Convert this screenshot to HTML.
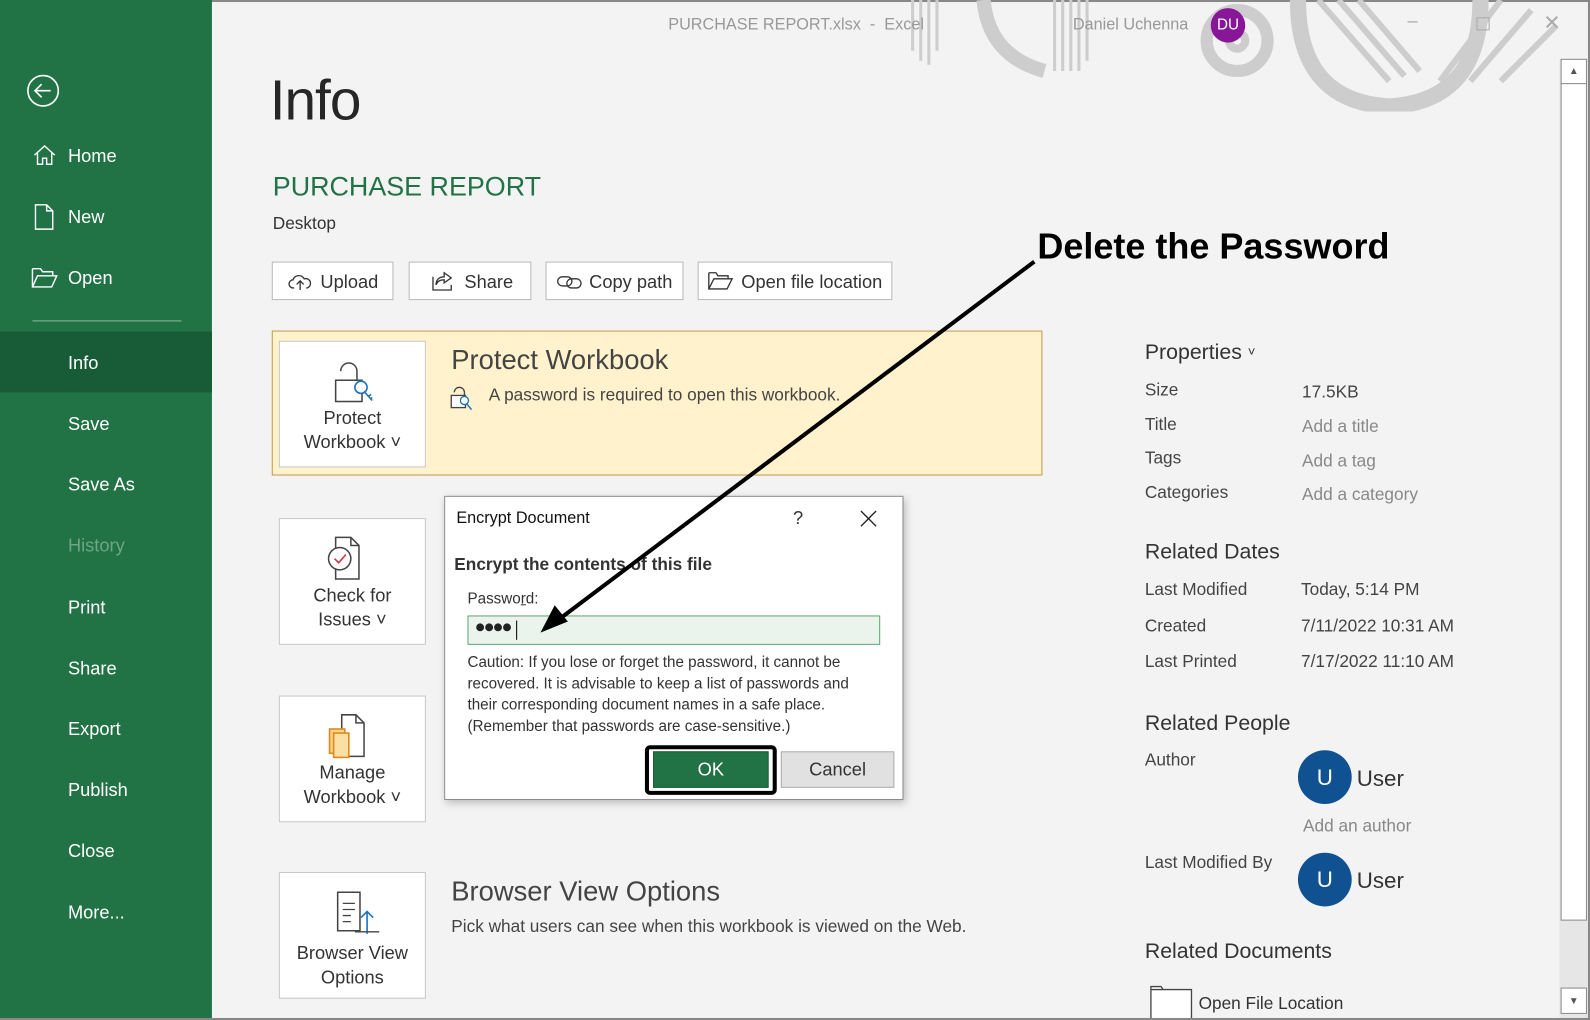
<!DOCTYPE html>
<html><head><meta charset="utf-8"><style>
*{margin:0;padding:0;box-sizing:border-box}
html,body{width:1590px;height:1020px;overflow:hidden;background:#f3f3f3;font-family:"Liberation Sans",sans-serif}
#w{position:absolute;left:0;top:0;width:1568px;height:1006px;transform:scale(1.01403,1.01392);transform-origin:0 0;background:#f3f3f3;overflow:hidden}
.a{position:absolute;white-space:nowrap}
.side{position:absolute;left:0;top:0;width:209px;height:1006px;background:#217346}
.mi{position:absolute;left:67px;color:#fff;font-size:18px}
.btn{position:absolute;top:258px;height:38px;background:#fff;border:1px solid #b9b9b9;font-size:18px;color:#333;padding:9px 0 0 0}
.card{position:absolute;left:275px;width:145px;height:125px;background:#fff;border:1px solid #c6c6c6;text-align:center;font-size:18px;color:#333;line-height:24px}
.pl{position:absolute;left:1129px;font-size:17px;color:#444}
.pv{position:absolute;left:1284px;font-size:17px;color:#444}
.g{color:#888}
.h{position:absolute;left:1129px;font-size:21px;color:#333}
.av{position:absolute;left:1280px;width:53px;height:53px;border-radius:50%;background:#0f5191;color:#fff;font-size:22px;text-align:center;line-height:53px}
</style></head><body><div id="w">
<div style="position:absolute;left:0;top:0;width:1568px;height:2px;background:#888"></div>
<svg class="a" style="left:880px;top:0" width="660" height="110" viewBox="0 0 660 110">
<g stroke="#cdcdcd" fill="none">
<g stroke-width="3"><line x1="20" y1="0" x2="20" y2="50"/><line x1="28" y1="0" x2="28" y2="60"/><line x1="36" y1="0" x2="36" y2="64"/><line x1="44" y1="0" x2="44" y2="50"/></g>
<path d="M90 0 Q95 55 150 70" stroke-width="14"/>
<g stroke-width="3"><line x1="160" y1="0" x2="160" y2="70"/><line x1="168" y1="0" x2="168" y2="70"/><line x1="176" y1="0" x2="176" y2="70"/><line x1="184" y1="0" x2="184" y2="70"/><line x1="192" y1="0" x2="192" y2="60"/></g>
<circle cx="340" cy="40" r="30" stroke-width="12"/><circle cx="340" cy="40" r="8" stroke-width="8"/>
<path d="M400 0 Q400 100 490 105 Q580 100 580 0" stroke-width="16"/>
<g stroke-width="6"><line x1="420" y1="0" x2="490" y2="80"/><line x1="440" y1="0" x2="505" y2="75"/><line x1="460" y1="0" x2="520" y2="70"/><line x1="600" y1="0" x2="540" y2="80"/><line x1="630" y1="10" x2="570" y2="80"/><line x1="655" y1="25" x2="600" y2="80"/></g>
</g></svg>
<div class="a" style="left:659px;top:16px;font-size:16px;color:#999">PURCHASE REPORT.xlsx&nbsp; - &nbsp;Excel</div>
<div class="a" style="left:1058px;top:16px;font-size:16px;color:#999">Daniel Uchenna</div>
<div class="a" style="left:1194px;top:8px;width:34px;height:34px;border-radius:50%;background:#881798;color:#fff;font-size:15px;text-align:center;line-height:34px">DU</div>
<div class="a" style="left:1388px;top:10px;font-size:18px;color:#aaa">–</div>
<div class="a" style="left:1456px;top:17px;width:13px;height:13px;border:1px solid #aaa"></div>
<div class="a" style="left:1522px;top:10px;font-size:20px;color:#aaa">✕</div>
<div class="side">
<svg class="a" style="left:26px;top:73px" width="33" height="33"><circle cx="16.5" cy="16.5" r="15" fill="none" stroke="#fff" stroke-width="1.6"/><path d="M24 16.5H9M15 10l-6.5 6.5L15 23" fill="none" stroke="#fff" stroke-width="1.6"/></svg>
<svg class="a" style="left:32px;top:141px" width="24" height="24"><path d="M2 12L12 3l10 9M5 10v11h5v-6h4v6h5V10" fill="none" stroke="#fff" stroke-width="1.4"/></svg>
<div class="mi" style="top:144px">Home</div>
<svg class="a" style="left:33px;top:201px" width="22" height="26"><path d="M2 1h11l6 6v18H2zM13 1v6h6" fill="none" stroke="#fff" stroke-width="1.4"/></svg>
<div class="mi" style="top:204px">New</div>
<svg class="a" style="left:31px;top:263px" width="26" height="22"><path d="M1 2h8l2 3h10v4M1 2v18h19l5-11H6L1 20" fill="none" stroke="#fff" stroke-width="1.4"/></svg>
<div class="mi" style="top:264px">Open</div>
<div class="a" style="left:32px;top:316px;width:147px;height:1px;background:#8fb9a0"></div>
<div class="a" style="left:0;top:327px;width:209px;height:60px;background:#185c37"></div>
<div class="mi" style="top:348px">Info</div>
<div class="mi" style="top:408px">Save</div>
<div class="mi" style="top:468px">Save As</div>
<div class="mi" style="top:528px;color:#6da585">History</div>
<div class="mi" style="top:589px">Print</div>
<div class="mi" style="top:649px">Share</div>
<div class="mi" style="top:709px">Export</div>
<div class="mi" style="top:769px">Publish</div>
<div class="mi" style="top:829px">Close</div>
<div class="mi" style="top:890px">More...</div>
</div>
<div class="a" style="left:266px;top:66px;font-size:56px;color:#262626;letter-spacing:-1px">Info</div>
<div class="a" style="left:269px;top:169px;font-size:26.5px;color:#217346">PURCHASE REPORT</div>
<div class="a" style="left:269px;top:211px;font-size:17px;color:#333">Desktop</div>
<div class="btn" style="left:268px;width:120px"><span style="padding-left:47px">Upload</span></div>
<svg class="a" style="left:284px;top:268px" width="26" height="20"><path d="M6 16H5a4 4 0 010-8 6 6 0 0111-1 4.5 4.5 0 013 9h-1M12 18V9M8.5 12.5L12 9l3.5 3.5" fill="none" stroke="#333" stroke-width="1.3"/></svg>
<div class="btn" style="left:403px;width:121px"><span style="padding-left:54px">Share</span></div>
<svg class="a" style="left:424px;top:266px" width="26" height="22"><path d="M3 7v13h18v-5M14 3l7 5-7 5V10c-5 0-7 2-8 5 0-5 3-8 8-8z" fill="none" stroke="#333" stroke-width="1.3"/></svg>
<div class="btn" style="left:538px;width:136px"><span style="padding-left:42px">Copy path</span></div>
<svg class="a" style="left:549px;top:268px" width="26" height="20"><rect x="1" y="5" width="14" height="9" rx="4.5" fill="none" stroke="#333" stroke-width="1.3"/><rect x="10" y="7" width="14" height="9" rx="4.5" fill="none" stroke="#333" stroke-width="1.3"/></svg>
<div class="btn" style="left:688px;width:192px"><span style="padding-left:42px">Open file location</span></div>
<svg class="a" style="left:698px;top:267px" width="26" height="20"><path d="M1 2h7l2 3h10v3M1 2v16h18l5-10H6L1 18" fill="none" stroke="#333" stroke-width="1.3"/></svg>
<div class="a" style="left:268px;top:326px;width:760px;height:143px;background:#fff2cc;border:1px solid #c49a48"></div>
<div class="card" style="top:336px;padding-top:63px">Protect<br>Workbook ˅</div>
<svg class="a" style="left:328px;top:354px" width="46" height="46"><path d="M8 12a8 8 0 0116 0v9" fill="none" stroke="#444" stroke-width="1.5"/><rect x="3" y="21" width="26" height="21" fill="#fff" stroke="#444" stroke-width="1.5"/><circle cx="28" cy="28" r="6" fill="#fff" stroke="#1e73be" stroke-width="1.6"/><path d="M31 32l8 9M35 37l3-2M37 40l2-2" stroke="#1e73be" stroke-width="1.6" fill="none"/></svg>
<div class="a" style="left:445px;top:340px;font-size:27px;color:#444">Protect Workbook</div>
<svg class="a" style="left:443px;top:377px" width="28" height="28"><path d="M5 10a5 5 0 0110 0v4" fill="none" stroke="#444" stroke-width="1.3"/><rect x="2" y="13" width="14" height="12" fill="#fff" stroke="#444" stroke-width="1.3"/><circle cx="15" cy="18" r="4" fill="#fff" stroke="#1e73be" stroke-width="1.3"/><path d="M17 21l5 6" stroke="#1e73be" stroke-width="1.4"/></svg>
<div class="a" style="left:482px;top:380px;font-size:17px;color:#444">A password is required to open this workbook.</div>
<div class="card" style="top:511px;padding-top:63px">Check for<br>Issues ˅</div>
<svg class="a" style="left:320px;top:528px" width="46" height="46"><path d="M11 2h15l8 8v33H11z" fill="#fff" stroke="#444" stroke-width="1.5"/><path d="M26 2v8h8" fill="none" stroke="#444" stroke-width="1.5"/><circle cx="15" cy="23" r="11" fill="#fff" stroke="#444" stroke-width="1.5"/><path d="M10 23l4 4 7-8" fill="none" stroke="#d13438" stroke-width="1.6"/></svg>
<div class="a" style="left:445px;top:515px;font-size:27px;color:#444">Inspect Workbook</div>
<div class="a" style="left:445px;top:583px;font-size:17px;color:#444">Document properties, author's name and related dates and</div>
<div class="card" style="top:686px;padding-top:63px">Manage<br>Workbook ˅</div>
<svg class="a" style="left:320px;top:703px" width="46" height="46"><path d="M17 2h14l8 8v33H17z" fill="#fff" stroke="#444" stroke-width="1.5"/><path d="M31 2v8h8" fill="none" stroke="#444" stroke-width="1.5"/><rect x="5" y="16" width="15" height="24" fill="#f8d38a" stroke="#e08a1e" stroke-width="1.6"/><rect x="9" y="20" width="15" height="24" fill="#fbe0a5" stroke="#e08a1e" stroke-width="1.6"/></svg>
<div class="card" style="top:860px;padding-top:67px">Browser View<br>Options</div>
<svg class="a" style="left:330px;top:877px" width="46" height="46"><path d="M3 3h22v38H3z" fill="#fff" stroke="#444" stroke-width="1.5"/><path d="M8 14h12M8 20h12M8 26h8M8 32h8" stroke="#444" stroke-width="1.3"/><path d="M32 44V22M26 28l6-6 6 6" fill="none" stroke="#1e73be" stroke-width="1.6"/><path d="M20 42h24" stroke="#444" stroke-width="1.3"/></svg>
<div class="a" style="left:445px;top:864px;font-size:27px;color:#444">Browser View Options</div>
<div class="a" style="left:445px;top:904px;font-size:17px;color:#444">Pick what users can see when this workbook is viewed on the Web.</div>
<div class="h" style="top:336px">Properties <span style="font-size:13px;vertical-align:3px">˅</span></div>
<div class="pl" style="top:375px">Size</div><div class="pv" style="top:377px">17.5KB</div>
<div class="pl" style="top:409px">Title</div><div class="pv g" style="top:411px">Add a title</div>
<div class="pl" style="top:442px">Tags</div><div class="pv g" style="top:445px">Add a tag</div>
<div class="pl" style="top:476px">Categories</div><div class="pv g" style="top:478px">Add a category</div>
<div class="h" style="top:533px">Related Dates</div>
<div class="pl" style="top:572px">Last Modified</div><div class="pv" style="top:572px;left:1283px">Today, 5:14 PM</div>
<div class="pl" style="top:608px">Created</div><div class="pv" style="top:608px;left:1283px">7/11/2022 10:31 AM</div>
<div class="pl" style="top:643px">Last Printed</div><div class="pv" style="top:643px;left:1283px">7/17/2022 11:10 AM</div>
<div class="h" style="top:702px">Related People</div>
<div class="pl" style="top:740px">Author</div>
<div class="av" style="top:740px">U</div><div class="a" style="left:1338px;top:755px;font-size:22px;color:#333">User</div>
<div class="pv g" style="top:805px;left:1285px">Add an author</div>
<div class="pl" style="top:841px">Last Modified By</div>
<div class="av" style="top:841px">U</div><div class="a" style="left:1338px;top:856px;font-size:22px;color:#333">User</div>
<div class="h" style="top:927px">Related Documents</div>
<svg class="a" style="left:1134px;top:970px" width="44" height="36"><path d="M1 36V3h10l2 3h28v30" fill="#fff" stroke="#444" stroke-width="1.3"/><path d="M1 6h12" stroke="#444" stroke-width="1.3"/></svg>
<div class="a" style="left:1182px;top:980px;font-size:17px;color:#333">Open File Location</div>
<div class="a" style="left:1538px;top:58px;width:28px;height:948px;background:#e6e6e6"></div>
<div class="a" style="left:1539px;top:58px;width:26px;height:850px;background:#fff;border:1px solid #888"></div>
<div class="a" style="left:1539px;top:58px;width:26px;height:25px;border-bottom:1px solid #888;font-size:10px;color:#555;text-align:center;line-height:25px">▲</div>
<div class="a" style="left:1539px;top:974px;width:26px;height:26px;background:#fff;border:1px solid #888;font-size:10px;color:#555;text-align:center;line-height:26px">▼</div>
<div class="a" style="left:1566px;top:0;width:2px;height:1006px;background:#888"></div>
<div class="a" style="left:0;top:1004px;width:1568px;height:2px;background:#888"></div>
<div class="a" style="left:438px;top:489px;width:453px;height:300px;background:#fff;border:1px solid #8a8a8a;box-shadow:2px 3px 8px rgba(0,0,0,.25)"></div>
<div class="a" style="left:450px;top:503px;font-size:16px;color:#111">Encrypt Document</div>
<div class="a" style="left:782px;top:501px;font-size:18px;color:#333">?</div>
<svg class="a" style="left:848px;top:503px" width="17" height="17"><path d="M1 1l15 15M16 1L1 16" stroke="#222" stroke-width="1.3"/></svg>
<div class="a" style="left:448px;top:547px;font-size:17px;font-weight:bold;color:#333">Encrypt the contents of this file</div>
<div class="a" style="left:461px;top:582px;font-size:15px;color:#333">Passwo<u>r</u>d:</div>
<div class="a" style="left:461px;top:607px;width:407px;height:29px;background:#eaf4ec;border:1px solid #5fa66f"></div>
<div class="a" style="left:468px;top:608px;font-size:18px;color:#222;letter-spacing:-2px">●●●●</div>
<div class="a" style="left:509px;top:612px;width:1px;height:19px;background:#000"></div>
<div class="a" style="left:461px;top:643px;font-size:15px;color:#333;line-height:21px">Caution: If you lose or forget the password, it cannot be<br>recovered. It is advisable to keep a list of passwords and<br>their corresponding document names in a safe place.<br>(Remember that passwords are case-sensitive.)</div>
<div class="a" style="left:636px;top:735px;width:130px;height:49px;border:4px solid #000;border-radius:5px"></div>
<div class="a" style="left:644px;top:741px;width:114px;height:36px;background:#217346;border:1px solid #155f35;color:#fff;font-size:18px;text-align:center;line-height:34px">OK</div>
<div class="a" style="left:770px;top:741px;width:112px;height:36px;background:#e1e1e1;border:1px solid #adadad;color:#333;font-size:18px;text-align:center;line-height:34px">Cancel</div>
<svg class="a" style="left:0;top:0" width="1568" height="1006"><line x1="1020" y1="258" x2="555" y2="608" stroke="#000" stroke-width="4"/><path d="M533 624l14-27 13 16z" fill="#000"/></svg>
<div class="a" style="left:1023px;top:223px;font-size:35.5px;font-weight:bold;color:#000">Delete the Password</div>
</div></body></html>
